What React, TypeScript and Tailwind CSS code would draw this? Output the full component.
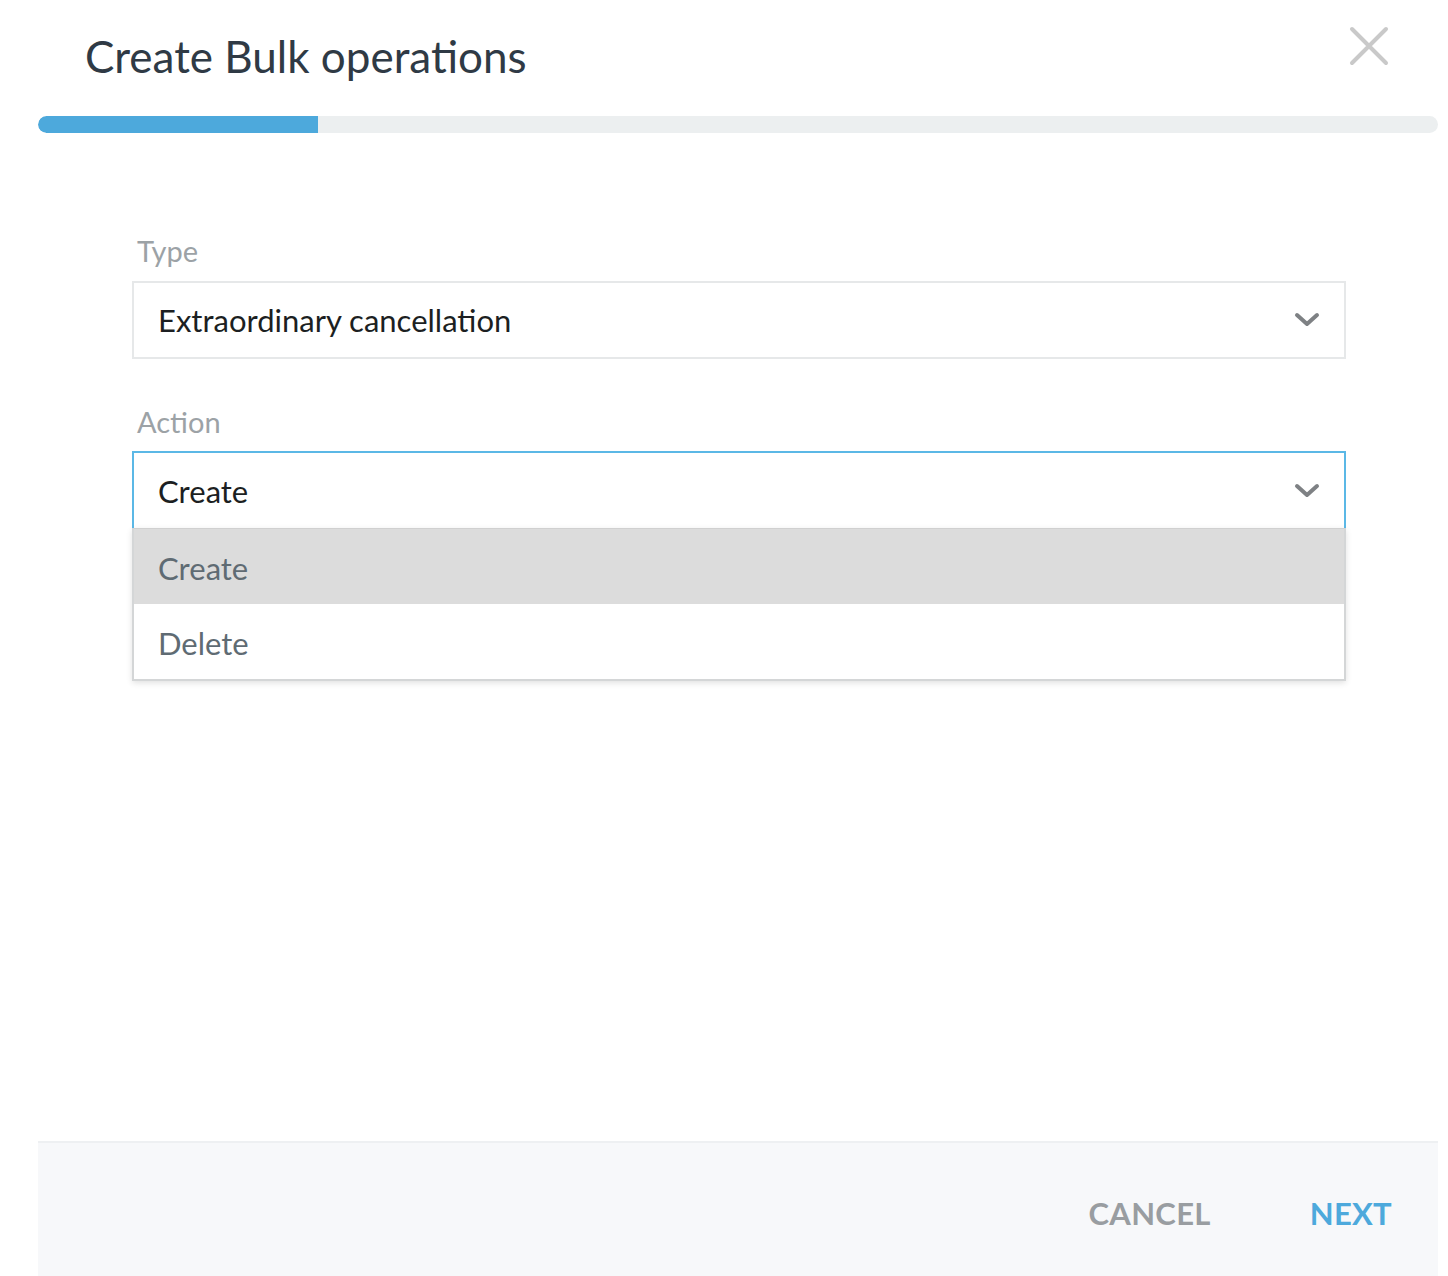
import { useState } from "react";

const font = { fontFamily: "Lato, 'Open Sans', sans-serif" };

function Chevron() {
  return (
    <svg width="26" height="16" viewBox="0 0 26 16" className="shrink-0">
      <path d="M3 3 L13 12 L23 3" fill="none" stroke="#7e8184" strokeWidth="4" strokeLinecap="round" strokeLinejoin="round" />
    </svg>
  );
}

export default function App() {
  const [action, setAction] = useState("Create");
  const options = ["Create", "Delete"];

  return (
    <div className="min-h-[1276px] w-[1448px] bg-white text-[#2f3a42]" style={font}>
      <div className="ml-[38px] flex h-[1276px] w-[1400px] flex-col">
        {/* Header */}
        <div className="flex h-[116px] items-start justify-between pl-[47px] pr-[48px]">
          <h1 className="mt-[28px] text-[44px] leading-[56px] font-normal text-[#2f3a45]">Create Bulk operations</h1>
          <button type="button" aria-label="Close" className="mt-[26px] mr-[1px]">
            <svg width="40" height="40" viewBox="0 0 40 40">
              <path d="M3 3 L37 37 M37 3 L3 37" stroke="#c9c9c9" strokeWidth="4" strokeLinecap="round" />
            </svg>
          </button>
        </div>

        {/* Progress */}
        <div className="h-[17px] w-full overflow-hidden rounded-full bg-[#eceff0]">
          <div className="h-full rounded-l-full bg-[#4da9dc]" style={{ width: "20%" }} />
        </div>

        {/* Form */}
        <div className="flex-1 pt-[98px] pr-[92px] pl-[94px]">
          <label className="block pl-[5px] text-[29px] leading-[40px] text-[#9ca2a6]">Type</label>
          <div className="mt-[10px] flex h-[78px] items-center justify-between border-2 border-[#e6e8e9] pr-[24px] pl-[24px]">
            <span className="text-[31px] text-[#1c1f22]">Extraordinary cancellation</span>
            <Chevron />
          </div>

          <label className="mt-[43px] block pl-[5px] text-[29px] leading-[40px] text-[#9ca2a6]">Action</label>
          <div className="relative mt-[9px]">
            <div className="flex h-[78px] items-center justify-between border-2 border-b-0 border-[#5bb8e6] pr-[24px] pl-[24px]">
              <span className="text-[31px] text-[#1c1f22]">{action}</span>
              <Chevron />
            </div>
            <ul className="absolute top-[77px] right-0 left-0 border-2 border-t border-[#d4d6d7] border-t-[#d0d0d0] bg-white shadow-[0_2px_6px_rgba(0,0,0,0.12)]">
              {options.map((o) => (
                <li
                  key={o}
                  onClick={() => setAction(o)}
                  className={`flex h-[75px] items-center pt-[4px] pl-[24px] text-[31px] text-[#5f6b73] ${o === action ? "bg-[#dcdcdc]" : "bg-white"}`}
                >
                  {o}
                </li>
              ))}
            </ul>
          </div>
        </div>

        {/* Footer */}
        <div className="flex h-[135px] items-center justify-end gap-[99px] border-t-2 border-[#eef0f2] bg-[#f7f8fa] pt-[8px] pr-[46px]">
          <button type="button" className="text-[31px] font-bold tracking-[0.3px] text-[#999da1]">CANCEL</button>
          <button type="button" className="text-[31px] font-bold tracking-[0.3px] text-[#4da9dc]">NEXT</button>
        </div>
      </div>
    </div>
  );
}
